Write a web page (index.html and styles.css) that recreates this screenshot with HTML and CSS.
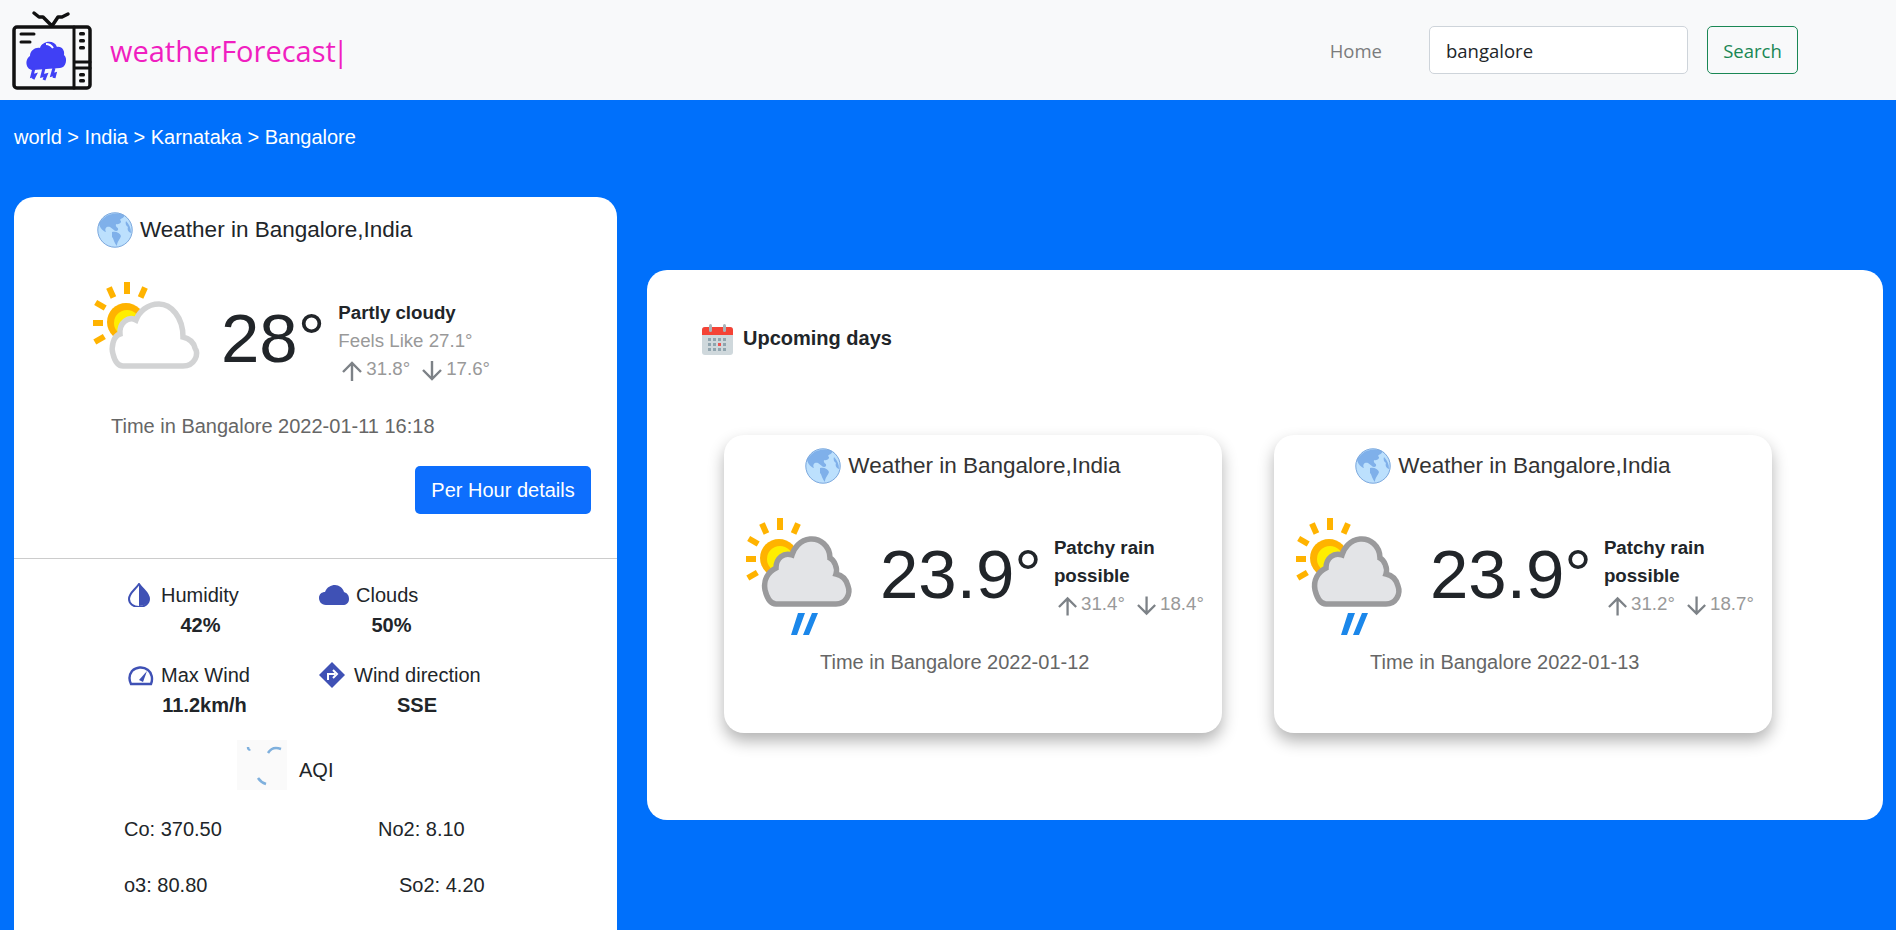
FILE: index.html
```html
<!DOCTYPE html>
<html lang="en">
<head>
  <meta charset="UTF-8" />
  <meta name="viewport" content="width=device-width, initial-scale=1.0" />
  <title>weatherForecast</title>
  <link rel="stylesheet" href="styles.css">
</head>
<body>
  <svg class="defs" width="0" height="0">
    <defs>
      <symbol id="globe" viewBox="0 0 36 36">
        <circle cx="18" cy="18" r="17.5" fill="#bce0fd"/>
        <path d="M8 5 C12 2 20 0 27 3 C28 6 24 6 23 8 C26 10 22 13 19 12 C18 16 22 15 21 18 C19 21 16 17 13 15 C10 14 7 16 9 20 C5 19 2 14 2 11 C4 8 6 7 8 5Z" fill="#7fb0ea"/>
        <path d="M15 20 C19 19 23 21 24 24 C23 28 20 29 20 34 C17 31 17 27 15 25Z" fill="#7fb0ea"/>
        <path d="M29 9 C32 12 34 16 34 21 C31 20 30 17 31 15 C29 14 28 11 29 9Z" fill="#7fb0ea"/>
        <circle cx="18" cy="18" r="17.2" fill="none" stroke="#7fa9dd" stroke-width="1"/>
      </symbol>
      <symbol id="sun" viewBox="0 0 110 120">
        <g fill="#ffb300">
          <rect x="31" y="0" width="6" height="12"/>
          <rect x="15" y="5" width="6" height="11" transform="rotate(-24 18 10)"/>
          <rect x="47" y="5" width="6" height="11" transform="rotate(24 50 10)"/>
          <rect x="4" y="18" width="6" height="11" transform="rotate(-60 7 23)"/>
          <rect x="0" y="38" width="10" height="6"/>
          <rect x="4" y="52" width="6" height="11" transform="rotate(60 7 57)"/>
        </g>
        <circle cx="33" cy="40" r="19" fill="#ffb300"/>
        <circle cx="34" cy="41" r="13" fill="#ffee00"/>
      </symbol>
      <symbol id="day-cloud" viewBox="0 0 110 120">
        <use href="#sun"/>
        <path d="M30 84 H90 C102 84 106 72 102 66 C100 58 94 56 90 55 C90 35 78 22 66 22 C54 22 46 30 43 38 C36 34 26 40 27 52 C20 54 18 66 20 72 C22 80 26 84 30 84Z" fill="#fff" stroke="#d2d3d4" stroke-width="5.500"/>
      </symbol>
      <symbol id="day-rain" viewBox="0 0 110 120">
        <use href="#sun"/>
        <path d="M30 86 H90 C100 86 105 76 102 68 C100 60 95 57 90 56 C92 50 88 42 84 40 C84 28 74 20 64 21 C54 22 48 30 46 37 C38 34 30 40 30 50 C22 54 17 62 19 72 C21 80 25 86 30 86Z" fill="#e3e4e7" stroke="#9a9a9c" stroke-width="5.500"/>
        <path d="M52 95 H59 L51 117 H45Z M66 95 H72 L63 117 H57Z" fill="#1b87ea"/>
      </symbol>
      <symbol id="arrow-up" viewBox="0 0 20 20">
        <path d="M10 20 V2 M1 11 L10 2 L19 11" fill="none" stroke="#7d8287" stroke-width="2.400"/>
      </symbol>
      <symbol id="arrow-down" viewBox="0 0 20 20">
        <path d="M10 0 V18 M1 9 L10 18 L19 9" fill="none" stroke="#7d8287" stroke-width="2.400"/>
      </symbol>
    </defs>
  </svg>

  <header class="navbar">
    <svg class="logo" viewBox="12 10 81 80">
      <g fill="none" stroke="#111" stroke-linecap="round" stroke-linejoin="round">
        <path d="M34 13 L39 17 L43 17 L52 26 L58 17 L62 17 L68 14" stroke-width="3.500"/>
        <rect x="14" y="27" width="76" height="61" rx="3" stroke-width="3.500"/>
        <path d="M74 27 V88 M74 62 H90 M74 68 H90" stroke-width="3"/>
        <path d="M21 34 H34 M21 42 H30" stroke-width="3"/>
      </g>
      <g fill="#111">
        <rect x="79" y="32" width="6" height="3.500" rx="1.500"/>
        <rect x="79" y="39" width="6" height="3.500" rx="1.500"/>
        <rect x="79" y="46" width="6" height="3.500" rx="1.500"/>
        <rect x="79" y="73" width="6" height="3.500" rx="1.500"/>
        <rect x="79" y="79" width="6" height="3.500" rx="1.500"/>
      </g>
      <path d="M33 70 C26 70 24 60 30 56 C30 50 36 47 40 48 C42 41 54 39 57 47 C62 46 65 51 64 55 C68 58 66 68 60 68 Z" fill="#4040f5"/>
      <path d="M46 44 C49 44 51 45 53 48" fill="none" stroke="#fff" stroke-width="2"/>
      <path d="M34 68 L32 76 L35 75 L33 79 M44 68 L42 76 L46 75 L44 80 M54 68 L52 75 L55 74 L54 78" fill="none" stroke="#4040f5" stroke-width="3"/>
    </svg>
    <a class="brand">weatherForecast<span class="caret">|</span></a>
    <nav class="nav-right">
      <a class="nav-link">Home</a>
      <input class="search-input" type="text" value="bangalore" />
      <button class="search-btn">Search</button>
    </nav>
  </header>

  <div class="crumbs">world &gt; India &gt; Karnataka &gt; Bangalore</div>

  <main class="content">
    <section class="current">
      <div class="now">
        <h5 class="place"><svg class="globe"><use href="#globe"/></svg>Weather in Bangalore,India</h5>
        <div class="reading">
          <svg class="cond-icon"><use href="#day-cloud"/></svg>
          <div class="temp">28°</div>
          <div class="cond">
            <b>Partly cloudy</b>
            <span class="feels">Feels Like 27.1°</span>
            <div class="minmax">
              <svg class="arrow"><use href="#arrow-up"/></svg><span>31.8°</span>
              <svg class="arrow second"><use href="#arrow-down"/></svg><span>17.6°</span>
            </div>
          </div>
        </div>
        <p class="time">Time in Bangalore 2022-01-11 16:18</p>
        <div class="actions"><button class="hour-btn">Per Hour details</button></div>
      </div>

      <div class="stats">
        <div class="stat stat-small">
          <div class="stat-label">
            <svg class="stat-icon" viewBox="0 0 22 24"><path d="M11 1 C15 7 21 10 21 16 A10 8 0 0 1 1 16 C1 10 7 7 11 1Z" fill="none" stroke="#3f51b5" stroke-width="2"/><path d="M11 2 V23 C17 23 21 20 21 16 C21 10 15 7 11 2Z" fill="#3f51b5"/></svg>
            Humidity
          </div>
          <b>42%</b>
        </div>
        <div class="stat stat-small">
          <div class="stat-label">
            <svg class="stat-icon wide" viewBox="0 0 30 20"><path d="M7 20 C2 20 0 16 0 13 C0 9 3 7 6 7 C8 2 12 0 16 0 C20 0 24 3 25 7 C28 8 30 10 30 14 C30 18 27 20 24 20Z" fill="#3f51b5"/></svg>
            Clouds
          </div>
          <b>50%</b>
        </div>
        <div class="stat stat-mid">
          <div class="stat-label">
            <svg class="stat-icon gauge speed" viewBox="0 0 26 20"><path d="M3 19 H23 C25 14 24 8 20 5 C15 1 8 2 4 6 C1 10 1 15 3 19Z" fill="none" stroke="#3f51b5" stroke-width="2.400"/><path d="M11 15 L19 6 L15 17Z" fill="#3f51b5"/></svg>
            Max Wind
          </div>
          <b>11.2km/h</b>
        </div>
        <div class="stat stat-big">
          <div class="stat-label">
            <svg class="stat-icon gauge" viewBox="0 0 26 26"><path d="M13 0 L26 13 L13 26 L0 13Z" fill="#3f51b5"/><path d="M9 18 V12 H16 M14 8 L18 12 L14 16" fill="none" stroke="#fff" stroke-width="2"/></svg>
            Wind direction
          </div>
          <b>SSE</b>
        </div>
      </div>

      <div class="aqi">
        <svg class="aqi-img" viewBox="0 0 50 50">
          <rect width="50" height="50" fill="#fafafa"/>
          <path d="M11 7 C11 9 12 10 13 9 M31 13 C34 8 39 7 44 9 M21 38 C23 41 26 43 29 44" fill="none" stroke="#7fb0dd" stroke-width="2.500"/>
        </svg>
        <span class="aqi-label">AQI</span>
      </div>
      <div class="pollutants">
        <span class="co">Co: 370.50</span><span>No2: 8.10</span>
      </div>
      <div class="pollutants">
        <span class="co">o3: 80.80</span><span class="so2">So2: 4.20</span>
      </div>
    </section>

    <section class="upcoming">
      <h6 class="upcoming-title">
        <svg class="cal" viewBox="0 0 31 31">
          <rect x="0" y="3" width="31" height="28" rx="3" fill="#cfd8dc"/>
          <path d="M0 11 V6 A3 3 0 0 1 3 3 H28 A3 3 0 0 1 31 6 V11Z" fill="#f44336"/>
          <rect x="7" y="0" width="3" height="8" rx="1.500" fill="#a9b4ba"/>
          <rect x="21" y="0" width="3" height="8" rx="1.500" fill="#a9b4ba"/>
          <g fill="#90a4ae">
            <rect x="6" y="14" width="3" height="3"/><rect x="11" y="14" width="3" height="3"/><rect x="16" y="14" width="3" height="3"/><rect x="21" y="14" width="3" height="3"/>
            <rect x="6" y="19" width="3" height="3"/><rect x="11" y="19" width="3" height="3"/><rect x="21" y="19" width="3" height="3"/>
            <rect x="6" y="24" width="3" height="3"/><rect x="11" y="24" width="3" height="3"/><rect x="16" y="24" width="3" height="3"/><rect x="21" y="24" width="3" height="3"/>
          </g>
          <rect x="16" y="19" width="3" height="3" fill="#ef5350"/>
        </svg>
        Upcoming days
      </h6>
      <div class="days">
        <article class="day">
          <h5 class="place"><svg class="globe"><use href="#globe"/></svg>Weather in Bangalore,India</h5>
          <div class="reading">
            <svg class="cond-icon"><use href="#day-rain"/></svg>
            <div class="temp">23.9°</div>
            <div class="cond">
              <b>Patchy rain possible</b>
              <div class="minmax">
                <svg class="arrow"><use href="#arrow-up"/></svg><span>31.4°</span>
                <svg class="arrow second"><use href="#arrow-down"/></svg><span>18.4°</span>
              </div>
            </div>
          </div>
          <p class="time">Time in Bangalore 2022-01-12</p>
        </article>
        <article class="day">
          <h5 class="place"><svg class="globe"><use href="#globe"/></svg>Weather in Bangalore,India</h5>
          <div class="reading">
            <svg class="cond-icon"><use href="#day-rain"/></svg>
            <div class="temp">23.9°</div>
            <div class="cond">
              <b>Patchy rain possible</b>
              <div class="minmax">
                <svg class="arrow"><use href="#arrow-up"/></svg><span>31.2°</span>
                <svg class="arrow second"><use href="#arrow-down"/></svg><span>18.7°</span>
              </div>
            </div>
          </div>
          <p class="time">Time in Bangalore 2022-01-13</p>
        </article>
      </div>
    </section>
  </main>
</body>
</html>
```

FILE: styles.css
```css
* {
  box-sizing: border-box;
}
html, body {
  height: 930px;
  overflow: hidden;
}
body {
  margin: 0;
  font-family: "Liberation Sans", Arial, sans-serif;
  font-size: 20px;
  color: #212529;
  background-color: #0070fb;
}
.defs {
  display: block;
}
.navbar {
  display: flex;
  align-items: center;
  height: 100px;
  padding-left: 12px;
  background-color: #f8f9fa;
}
.logo {
  width: 81px;
  height: 80px;
}
.brand {
  margin-left: 17px;
  font-family: "Open Sans", sans-serif;
  font-size: 29px;
  font-weight: 500;
  color: #f01fc0;
}
.caret {
  margin-left: -3px;
  font-weight: 400;
}
.nav-right {
  display: flex;
  align-items: center;
  margin-left: auto;
  margin-right: 98px;
  font-family: "Open Sans", sans-serif;
}
.nav-link {
  font-size: 18.500px;
  color: #7b7c7d;
  margin-right: 47px;
}
.search-input {
  width: 259px;
  height: 48px;
  padding: 0 16px;
  border: 1px solid #ced4da;
  border-radius: 5px;
  background: #fff;
  font-family: "Open Sans", sans-serif;
  font-size: 18.500px;
  color: #212529;
}
.search-btn {
  width: 91px;
  height: 48px;
  margin-left: 19px;
  border: 1px solid #198754;
  border-radius: 5px;
  background: transparent;
  font-family: "Open Sans", sans-serif;
  font-size: 18.500px;
  color: #198754;
}
.crumbs {
  padding: 25px 0 0 14px;
  height: 97px;
  line-height: 24px;
  color: #fff;
}
.content {
  display: flex;
  align-items: flex-start;
  padding: 0 14px;
  gap: 30px;
}
.current {
  flex: none;
  width: 603px;
  height: 780px;
  background: #fff;
  border-radius: 20px;
}
.now {
  height: 362px;
  border-bottom: 1px solid #ccc;
  padding: 15px 0 0 83px;
}
.place {
  display: flex;
  align-items: center;
  gap: 7px;
  margin: 0;
  font-size: 22.500px;
  font-weight: 400;
  line-height: 30px;
  color: #212529;
}
.globe {
  width: 36px;
  height: 36px;
}
.reading {
  display: flex;
  margin: 34px 0 0 -4px;
}
.cond-icon {
  flex: none;
  width: 110px;
  height: 120px;
  filter: blur(0.5px);
}
.temp {
  margin: 15px 0 0 18px;
  font-size: 69px;
  line-height: 84px;
}
.cond {
  display: flex;
  flex-direction: column;
  margin: 17px 0 0 13px;
  line-height: 28px;
  font-size: 18.700px;
}
.feels {
  color: #999;
}
.minmax {
  display: flex;
  align-items: center;
  margin-left: 4px;
  color: #999;
  white-space: nowrap;
}
.arrow {
  width: 20px;
  height: 20px;
  margin-right: 4px;
  position: relative;
  top: 2px;
}
.arrow.second {
  margin-left: 12px;
}
.time {
  margin: 13px 0 0 14px;
  color: #666;
}
.actions {
  display: flex;
  justify-content: flex-end;
  margin: 28px 26px 0 0;
}
.hour-btn {
  width: 176px;
  height: 48px;
  border: none;
  border-radius: 5px;
  background: #0d6efd;
  color: #fff;
  font-family: "Liberation Sans", Arial, sans-serif;
  font-size: 20px;
}
.stats {
  display: grid;
  grid-template-columns: 191px 1fr;
  grid-auto-rows: 80px;
  padding: 21px 0 0 114px;
  height: 181px;
}
.stat {
  display: flex;
  flex-direction: column;
  line-height: 30px;
}
.stat-small {
  width: 145px;
}
.stat-mid {
  width: 153px;
}
.stat-big {
  width: 196px;
}
.stat b {
  text-align: center;
}
.stat-label {
  display: flex;
  align-items: center;
  gap: 11px;
  white-space: nowrap;
}
.stat-icon {
  flex: none;
  width: 22px;
  height: 24px;
}
.stat-icon.wide {
  width: 30px;
  height: 20px;
  margin-right: -4px;
}
.stat-icon.gauge {
  width: 26px;
  height: 26px;
  margin-right: -2px;
}
.stat-icon.gauge.speed {
  margin-right: -4px;
}
.aqi {
  display: flex;
  align-items: flex-start;
  gap: 12px;
  padding-left: 223px;
}
.aqi-img {
  width: 50px;
  height: 50px;
}
.aqi-label {
  margin-top: 19px;
}
.pollutants {
  display: flex;
  height: 56px;
  padding: 27px 0 0 110px;
  line-height: 24px;
}
.pollutants .co {
  width: 254px;
}
.pollutants .so2 {
  margin-left: 21px;
}
.upcoming {
  flex: none;
  width: 1236px;
  height: 550px;
  margin-top: 73px;
  padding: 54px 0 0 55px;
  background: #fff;
  border-radius: 20px;
}
.upcoming-title {
  display: flex;
  align-items: flex-start;
  gap: 10px;
  margin: 0;
  font-size: 20px;
  font-weight: 700;
  line-height: 28px;
}
.cal {
  width: 31px;
  height: 31px;
}
.days {
  display: flex;
  gap: 52px;
  margin: 80px 0 0 22px;
}
.day {
  width: 498px;
  height: 298px;
  padding-top: 13px;
  border-radius: 20px;
  background: #fff;
  box-shadow: 0 8px 16px rgba(0, 0, 0, 0.3);
}
.day .place {
  justify-content: center;
  padding-right: 20px;
  color: #333;
}
.day .reading {
  margin: 34px 0 0 22px;
}
.day .temp {
  margin: 15px 0 0 24px;
}
.day .cond {
  margin: 16px 0 0 12px;
  width: 150px;
}
.day .time {
  margin: 13px 0 0 96px;
}
```
